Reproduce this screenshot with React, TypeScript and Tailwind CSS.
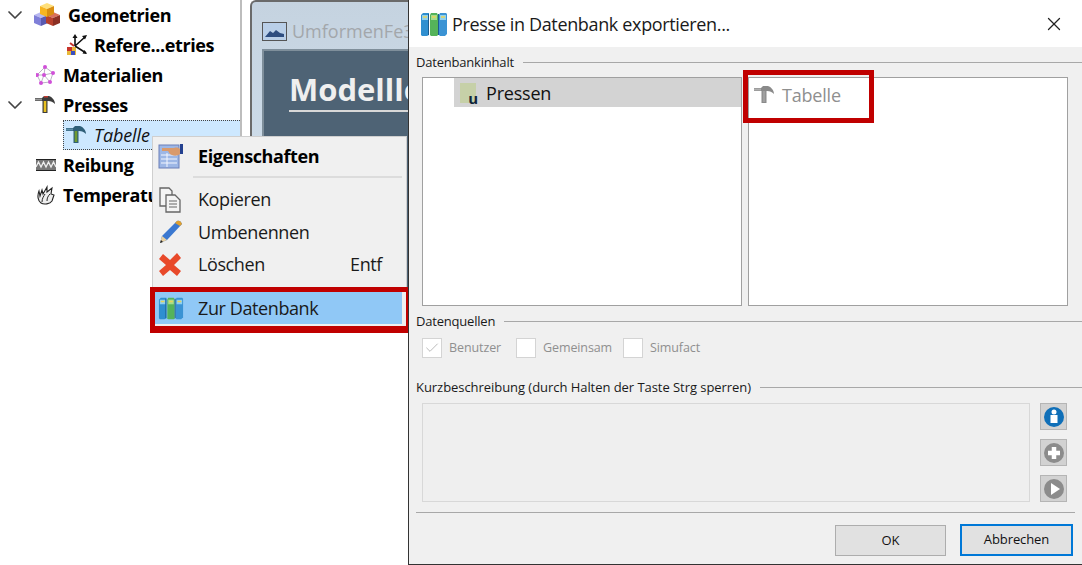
import { Check, ChevronDown, X } from "lucide-react";

const Cube = ({ x, y, top, left, right }: { x: number; y: number; top: string; left: string; right: string }) => (
  <g transform={`translate(${x} ${y})`}>
    <path d="M7 0l7 3-7 3-7-3z" fill={top} />
    <path d="M0 3l7 3v8l-7-3z" fill={left} />
    <path d="M14 3l-7 3v8l7-3z" fill={right} />
  </g>
);

const Cubes = () => (
  <svg width="28" height="28" viewBox="0 0 28 28">
    <Cube x={0} y={11} top="#b8b8f0" left="#7f7fd8" right="#5a5ab0" />
    <Cube x={12} y={11} top="#d9705a" left="#b8402c" right="#8c3024" />
    <Cube x={6} y={2} top="#ffe07a" left="#f7b520" right="#d98e10" />
  </svg>
);

const Axes = () => (
  <svg width="22" height="22" viewBox="0 0 22 22">
    <rect x="1" y="13" width="9" height="8" fill="#e8b93a" />
    <rect x="1" y="13" width="5" height="4" fill="#c8352c" />
    <rect x="5" y="17" width="4" height="4" fill="#3a4fc0" />
    <path d="M4 9l4 3" stroke="#c8352c" strokeWidth="2" />
    <path d="M9 12L9 3M9 12L19 3M9 12L20 19" stroke="#111" strokeWidth="1.6" fill="none" />
    <path d="M9 0l-2.500 4h5zM21 1l-5 1 3 3.500zM21 20l-4.500-.5 2-3.500z" fill="#111" />
  </svg>
);

const Atoms = () => (
  <svg width="20" height="20" viewBox="0 0 20 20">
    <path d="M9 2l8 6-3 9-9 1-4-8zM9 2l-1 8 6 7M1 10l7 0 9-2M5 18l3-8" stroke="#a9a0b5" strokeWidth="0.8" fill="none" />
    {[[9, 2], [17, 8], [14, 17], [5, 18], [1, 10], [8, 10]].map(([cx, cy], i) => (
      <circle key={i} cx={cx} cy={cy} r="2" fill="#d050d8" />
    ))}
  </svg>
);

const Hammer = ({ handle = "#e8c020", head = "#3c3c3c", flat = "#9a9a9a", cap = "#c03a30" }: { handle?: string; head?: string; flat?: string; cap?: string }) => (
  <svg width="21" height="20" viewBox="0 0 21 20">
    <path d="M0 3h7l2-2h5c3 1 6 4 6 8-2-2-4-3-7-3H6L4 6H0z" fill={head} />
    <path d="M0 3.500h7v2H0z" fill={flat} />
    <path d="M9 1h4v1.500H9z" fill={cap} />
    <rect x="7.500" y="6" width="5" height="12" fill={head} />
    <rect x="8.700" y="6" width="2.600" height="11" fill={handle} />
  </svg>
);

const Friction = () => (
  <svg width="20" height="12" viewBox="0 0 20 12">
    <rect width="20" height="12" fill="#777" />
    <path d="M0 8l2.500-5 2.500 5 2.500-5 2.500 5 2.500-5 2.500 5 2.500-5 2.500 5" fill="none" stroke="#eee" strokeWidth="1.300" />
    <path d="M0 .5h20M0 11.500h20" stroke="#222" strokeWidth="1" />
  </svg>
);

const Flame = () => (
  <svg width="20" height="20" viewBox="0 0 20 20">
    <path d="M3 6l1 5 2-6 1 4 4-7 0 5 5-4-1 6 3 1-2 6c-2 3-8 4-11 2C2 16 1 11 3 6z" fill="#eee" stroke="#222" strokeWidth="1.100" />
    <path d="M6 17c0-4 2-6 3-8M11 16c0-3 1-5 3-7" stroke="#222" strokeWidth="1" fill="none" />
  </svg>
);

const Books = ({ size = 28 }: { size?: number }) => (
  <svg width={size} height={size} viewBox="0 0 28 28">
    <path d="M1 5l2-2h6v22l-2 1H2l-1-1z" fill="#2f8fd0" />
    <path d="M10 5l1-2h6l1 2v20l-1 1h-6l-1-1z" fill="#55b35a" />
    <path d="M19 5l1-2h6l1 1v20l-2 2h-5l-1-1z" fill="#3a93d4" />
    <path d="M2 5h6v5H2zM20 5h6v5h-6z" fill="#8fd0ee" />
    <path d="M11 5h6v5h-6z" fill="#a6dc8c" />
    <path d="M3 7h4M12 7h4M21 7h4" stroke="#e8d45a" strokeWidth="1.500" />
    <path d="M8.500 4v21M18.500 4v21" stroke="#1c5c90" strokeWidth="1" />
  </svg>
);

const PropsIcon = () => (
  <svg width="26" height="26" viewBox="0 0 26 26">
    <rect x="1" y="2" width="20" height="23" fill="#9db7e6" stroke="#6a7fb8" />
    <path d="M3 12h16M3 16h16M3 20h16M9 10v14" stroke="#f3f6ff" strokeWidth="1" />
    <path d="M4 5h12c3-1 5 0 6 1v5c-2 2-6 2-8 1-2 0-3-3-4-4H4z" fill="#d99a6c" />
    <rect x="22" y="1" width="3" height="10" fill="#23408f" />
  </svg>
);

const CopyIcon = () => (
  <svg width="24" height="26" viewBox="0 0 24 26" fill="#f4f4f4" stroke="#666" strokeWidth="1.300">
    <path d="M2 1h9l3 3v15H2z" />
    <path d="M8 8h9l5 5v12H8z" />
    <path d="M11 14h8M11 17h8M11 20h8" strokeWidth="1" />
  </svg>
);

const Pencil = () => (
  <svg width="26" height="26" viewBox="0 0 26 26">
    <path d="M2 24l2-7L19 2c2-1 4 0 5 3L9 21z" fill="#3b78d0" />
    <path d="M19 2c2-1 4 0 5 3l-2 2-5-3z" fill="#e0a030" />
    <path d="M2 24l2-7 5 4z" fill="#e8d0a0" />
    <path d="M2 24l1-3 2 2z" fill="#222" />
  </svg>
);

const RedCross = () => (
  <svg width="24" height="24" viewBox="0 0 24 24">
    <path d="M1 6l4-5 7 6 7-7 4 5-7 7 7 6-4 5-7-6-7 6-4-5 7-6z" fill="#e8492a" />
  </svg>
);

const TreeRow = ({ icon, label, indent, caret, w }: { icon: React.ReactNode; label: string; indent: string; caret?: boolean; w?: string }) => (
  <div className={`flex h-[30px] items-center ${indent}`}>
    {caret && <ChevronDown size={24} strokeWidth={1.700} className="absolute left-[3px] text-[#444]" />}
    <span className={`mr-[5px] flex justify-center ${w ?? "w-[25px]"}`}>{icon}</span>
    <span className="text-[18px] font-bold tracking-[-0.4px] text-black">{label}</span>
  </div>
);

const MenuItem = ({ icon, label, right, bold, pad }: { icon: React.ReactNode; label: string; right?: string; bold?: boolean; pad?: string }) => (
  <div className={`flex h-[32.500px] items-center pr-[24px] ${pad ?? "pl-[5px]"}`}>
    <span className="flex w-[40px] justify-start">{icon}</span>
    <span className={`flex-1 text-[18px] tracking-[-0.4px] ${bold ? "font-bold text-black" : "text-[#1a1a1a]"}`}>{label}</span>
    {right && <span className="text-[18px] tracking-[-0.4px] text-[#1a1a1a]">{right}</span>}
  </div>
);

const GroupLabel = ({ label, spacing }: { label: string; spacing?: string }) => (
  <div className={`flex h-[15px] items-center gap-[9px] text-[13px] text-[#1a1a1a] ${spacing ?? "tracking-[-0.2px]"}`}>
    <span>{label}</span>
    <div className="h-px flex-1 bg-[#a8a8a8]" />
  </div>
);

const SourceCheck = ({ label, checked, w }: { label: string; checked?: boolean; w: string }) => (
  <div className={`flex items-center gap-[7px] ${w}`}>
    <span className="flex h-[20px] w-[20px] items-center justify-center border border-[#d4d4d4] bg-white">
      {checked && <Check size={16} strokeWidth={1.200} className="text-[#a8a8a8]" />}
    </span>
    <span className="text-[12.500px] tracking-[-0.1px] text-[#8f8f8f]">{label}</span>
  </div>
);

const SideButton = ({ children }: { children: React.ReactNode }) => (
  <div className="flex h-[27px] w-[27px] items-center justify-center border border-[#b5b5b5] bg-[#d2d2d2]">{children}</div>
);

export default function App() {
  return (
    <div className="relative h-[565px] w-[1082px] overflow-hidden bg-white font-['Open_Sans','Noto_Sans',sans-serif]">
      {/* project tree */}
      <div className="relative w-[242px]">
        <TreeRow icon={<Cubes />} label="Geometrien" indent="pl-[33px]" caret w="w-[30px]" />
        <TreeRow icon={<Axes />} label="Refere...etries" indent="pl-[65px]" w="w-[24px]" />
        <TreeRow icon={<Atoms />} label="Materialien" indent="pl-[33px]" />
        <TreeRow icon={<Hammer />} label="Presses" indent="pl-[33px]" caret />
        <div className="ml-[63px] flex h-[30px] items-center border border-dotted border-[#444] bg-[#cde8ff] pl-[2px]">
          <Hammer handle="#6f9a30" head="#2f5f78" flat="#5f8fa8" cap="#2f5f78" />
          <span className="ml-[7px] text-[18px] italic tracking-[-0.1px] text-[#111]">Tabelle</span>
        </div>
        <TreeRow icon={<Friction />} label="Reibung" indent="pl-[33px]" />
        <TreeRow icon={<Flame />} label="Temperatur" indent="pl-[33px]" />
      </div>

      {/* window behind the dialog */}
      <div className="absolute left-[240px] top-0 h-[333px] w-[170px] overflow-hidden border-l-[2px] border-l-[#bdbdbd] pl-[8px]">
        <div className="h-full rounded-tl-[6px] border-l-[2px] border-t-[2px] border-[#6a6a6a] bg-gradient-to-b from-[#c5d3e0] to-[#d6e5f3] pl-[10px] pt-[18px]">
          <div className="flex h-[22px] items-center gap-[5px]">
            <svg className="shrink-0" width="25" height="19" viewBox="0 0 25 19">
              <rect x="0.500" y="0.500" width="24" height="18" fill="#b9cfe8" stroke="#555" />
              <path d="M3 15l5-6 3 2 3-3 4 3 4 1v3H3z" fill="#2d4d80" />
            </svg>
            <span className="whitespace-nowrap text-[18px] text-[#a3a7ab]">UmformenFe3</span>
          </div>
          <div className="mt-[7px] h-full border-l-[2px] border-t-[2px] border-[#7f8f9b] bg-[#4e6375] pl-[25px] pt-[20px]">
            <span className="whitespace-nowrap border-b-[2px] border-[#d8d8d8] text-[31px] font-bold leading-[36px] text-[#efefef]">Modelllo</span>
          </div>
        </div>
      </div>

      {/* context menu */}
      <div className="absolute left-[152px] top-[136px] h-[197px] w-[255px] border border-[#cfcfcf] bg-[#f0f0f0] pt-[3px]">
        <MenuItem icon={<PropsIcon />} label="Eigenschaften" bold />
        <div className="my-[3px] ml-[40px] mr-[4px] h-[2px] bg-[#dcdcdc]" />
        <div className="mt-[6px]" />
        <MenuItem icon={<CopyIcon />} label="Kopieren" />
        <MenuItem icon={<Pencil />} label="Umbenennen" />
        <MenuItem icon={<RedCross />} label="Löschen" right="Entf" />
        <div className="absolute left-[2px] top-[154px] h-[33px] w-[247px] bg-[#90c8f6] pt-[1px]">
          <MenuItem icon={<Books size={26} />} label="Zur Datenbank" pad="pl-[3px]" />
        </div>
      </div>
      <div className="absolute left-[150px] top-[287px] h-[46px] w-[261px] border-[5px] border-b-[7px] border-[#c00000]" />

      {/* export dialog */}
      <div className="absolute left-[408px] top-0 flex h-[565px] w-[674px] flex-col border-b border-l border-[#333] bg-[#f0f0f0]">
        <div className="flex h-[47px] shrink-0 items-center bg-white pl-[11px] pr-[17px]">
          <Books />
          <span className="ml-[4px] mt-[1px] flex-1 text-[18px] tracking-[-0.35px] text-[#1a1a1a]">Presse in Datenbank exportieren...</span>
          <X size={22} strokeWidth={1.400} className="text-[#222]" />
        </div>

        <div className="flex flex-1 flex-col pl-[7px]">
          <div className="mt-[8px]"><GroupLabel label="Datenbankinhalt" /></div>
          <div className="ml-[6px] mt-[7px] flex h-[229px] gap-[6px]">
            <div className="w-[320px] border border-[#a0a0a0] bg-white pl-[31px]">
              <div className="flex h-[29px] items-center bg-[#d3d3d3] pl-[6px]">
                <span className="relative mr-[10px] h-[20px] w-[16px] bg-[#c6d0a8]">
                  <span className="absolute bottom-[-3px] right-[-2px] text-[15px] font-bold leading-[15px] text-[#10243a]">u</span>
                </span>
                <span className="mt-[1px] text-[18px] tracking-[-0.2px] text-[#111]">Pressen</span>
              </div>
            </div>
            <div className="w-[320px] border border-[#a0a0a0] bg-white pl-[5px]">
              <div className="flex h-[34px] items-center">
                <Hammer handle="#a0a0a0" head="#8a8a8a" flat="#b0b0b0" cap="#8a8a8a" />
                <span className="ml-[7px] text-[18px] tracking-[-0.2px] text-[#8f8f8f]">Tabelle</span>
              </div>
            </div>
          </div>

          <div className="mt-[8px]"><GroupLabel label="Datenquellen" /></div>
          <div className="ml-[6px] mt-[9px] flex h-[20px] items-center">
            <SourceCheck label="Benutzer" checked w="w-[94px]" />
            <SourceCheck label="Gemeinsam" w="w-[107px]" />
            <SourceCheck label="Simufact" w="w-[100px]" />
          </div>

          <div className="mt-[22px]"><GroupLabel label="Kurzbeschreibung (durch Halten der Taste Strg sperren)" spacing="tracking-[-0.05px]" /></div>
          <div className="ml-[6px] mt-[8px] flex h-[99px] gap-[10px]">
            <div className="w-[608px] border border-[#d8d8d8] bg-[#efefef]" />
            <div className="flex w-[27px] flex-col justify-between">
              <SideButton>
                <svg width="22" height="22" viewBox="0 0 22 22">
                  <circle cx="11" cy="11" r="10" fill="#0f6fb8" />
                  <circle cx="11" cy="6" r="2.500" fill="#fff" />
                  <rect x="7.500" y="9" width="7" height="8" fill="#fff" />
                </svg>
              </SideButton>
              <SideButton>
                <svg width="22" height="22" viewBox="0 0 22 22">
                  <circle cx="11" cy="11" r="10" fill="#8c8c8c" />
                  <path d="M11 5v12M5 11h12" stroke="#fff" strokeWidth="4.500" />
                </svg>
              </SideButton>
              <SideButton>
                <svg width="22" height="22" viewBox="0 0 22 22">
                  <circle cx="11" cy="11" r="10" fill="#8c8c8c" />
                  <path d="M8 5l9 6-9 6z" fill="#fff" />
                </svg>
              </SideButton>
            </div>
          </div>

          <div className="mr-[7px] mt-[10px] h-[1px] bg-[#a8a8a8]" />
          <div className="mt-[11px] flex items-end justify-end gap-[14px] pr-[9px]">
            <button className="h-[31px] w-[111px] border border-[#adadad] bg-[#e1e1e1] text-[13px] tracking-[-0.1px] text-[#111]">OK</button>
            <button className="h-[32px] w-[113px] border-[2px] border-[#0078d7] bg-[#e1e1e1] text-[13px] tracking-[-0.1px] text-[#111]">Abbrechen</button>
          </div>
        </div>
      </div>
      <div className="absolute left-[743px] top-[70px] h-[53px] w-[131px] border-[5px] border-[#c00000]" />
    </div>
  );
}
